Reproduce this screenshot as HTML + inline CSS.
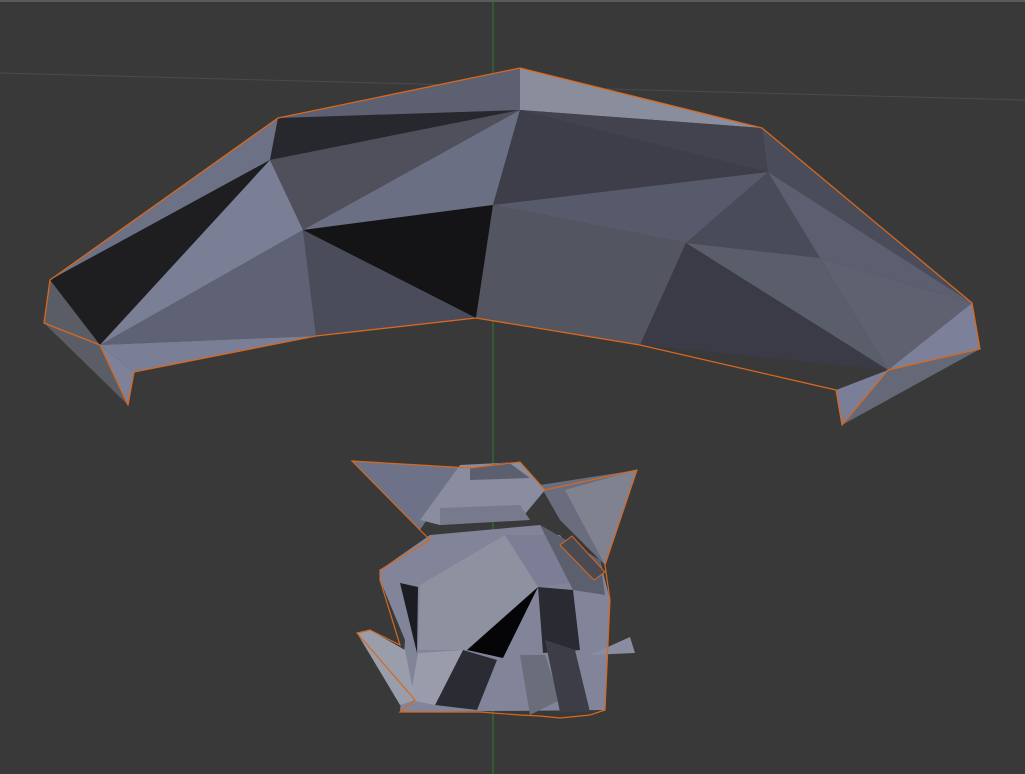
<!DOCTYPE html>
<html><head><meta charset="utf-8"><style>
html,body{margin:0;padding:0;background:#393939;overflow:hidden}
svg{display:block}
</style></head><body>
<svg width="1025" height="774" viewBox="0 0 1025 774" xmlns="http://www.w3.org/2000/svg">
<rect width="1025" height="774" fill="#393939"/>
<rect width="1025" height="2" fill="#5a5a5a"/>
<line x1="0" y1="73" x2="1025" y2="100" stroke="#4a4a4a" stroke-width="1"/>
<line x1="493" y1="0" x2="493" y2="774" stroke="#2e7a2e" stroke-width="1"/>
<g stroke-linejoin="round">
<polygon points="50,280 278,118 270,160" fill="#6d7186"/>
<polygon points="50,280 270,160 100,345" fill="#1e1e21"/>
<polygon points="270,160 303,230 100,345" fill="#7a7f95"/>
<polygon points="303,230 316,336 100,345" fill="#5e6274"/>
<polygon points="278,118 520,110 285,157 270,160" fill="#27282e"/>
<polygon points="278,118 520,68 520,110" fill="#5d6070"/>
<polygon points="285,157 520,110 303,230 270,160" fill="#4f505c"/>
<polygon points="303,230 520,110 493,205" fill="#6b6f83"/>
<polygon points="303,230 493,205 476,318" fill="#141417"/>
<polygon points="303,230 476,318 316,336" fill="#4a4c5a"/>
<polygon points="520,68 762,128 520,110" fill="#8a8d9c"/>
<polygon points="520,110 762,128 768,172" fill="#42434f"/>
<polygon points="520,110 768,172 493,205" fill="#3d3e4a"/>
<polygon points="493,205 768,172 686,243" fill="#575a6a"/>
<polygon points="493,205 686,243 640,345 476,318" fill="#535560"/>
<polygon points="686,243 768,172 820,258" fill="#4a4b58"/>
<polygon points="686,243 820,258 888,370" fill="#5a5d6a"/>
<polygon points="686,243 888,370 640,345" fill="#3a3b47"/>
<polygon points="762,128 972,303 768,172" fill="#4a4c5a"/>
<polygon points="768,172 972,303 820,258" fill="#5c5f70"/>
<polygon points="820,258 972,303 888,370" fill="#5f6170"/>
<polygon points="972,303 980,349 888,370" fill="#7c8098"/>
<polygon points="888,370 842,425 836,390" fill="#7a7e96"/>
<polygon points="888,370 980,349 842,425" fill="#656877"/>
<polygon points="100,345 316,336 134,372" fill="#7a7f96"/>
<polygon points="100,345 134,372 128,405" fill="#7d8298"/>
<polygon points="44,323 50,280 100,345 128,405" fill="#5b5d66"/>
<polygon points="50,280 278,118 520,68 762,128 972,303 980,349 888,370 842,425 836,390 640,345 476,318 316,336 134,372 128,405 100,345 44,323" fill="none" stroke="#d8681e" stroke-width="1.3"/>
</g>
<g>
<polygon points="352,461 470,468 440,500 420,530" fill="#6d7288"/>
<polygon points="540,485 637,470 605,565 560,520" fill="#6a6d7d"/>
<polygon points="565,490 637,470 605,565" fill="#80838f"/>
<polygon points="460,465 520,462 545,490 520,520 440,525 420,520" fill="#8a8da0"/>
<polygon points="470,468 508,462 530,478 470,480" fill="#5c5f6e"/>
<polygon points="440,508 520,505 530,520 440,525" fill="#777a8c"/>
<polygon points="380,570 430,535 540,525 600,560 610,600 605,710 400,712 405,640 380,580" fill="#82859a"/>
<polygon points="420,585 505,535 540,585 467,650 418,650" fill="#8e919f"/>
<polygon points="505,535 560,535 590,580 538,587" fill="#7b7e94"/>
<polygon points="540,525 600,560 605,595 573,590" fill="#5c5f6e"/>
<polygon points="467,650 538,587 503,658" fill="#050507"/>
<polygon points="538,587 573,590 580,650 543,653" fill="#2a2b32"/>
<polygon points="400,583 418,587 417,653" fill="#1c1d22"/>
<polygon points="463,650 497,660 477,710 435,705" fill="#2b2c33"/>
<polygon points="520,655 545,655 560,700 530,715" fill="#6a6d7a"/>
<polygon points="545,640 575,650 590,712 560,712" fill="#3c3d46"/>
<polygon points="418,653 463,650 435,705 410,700" fill="#9a9cab"/>
<polygon points="357,633 370,630 405,650 415,700 400,705" fill="#9a9daa"/>
<polygon points="590,655 630,637 635,653" fill="#8a8da0"/>
<polygon points="352,461 470,468 520,462 545,490 637,470 605,565 610,600 605,710 590,715 560,718 540,716 520,715 480,712 400,712 415,700 357,633 370,630 400,645 380,580 380,570 430,540 420,530" fill="none" stroke="#d8681e" stroke-width="1.2"/>
<polygon points="560,545 572,536 605,572 594,580" fill="#4a4b52" stroke="#d8681e" stroke-width="1"/>
</g>
</svg>
</body></html>
